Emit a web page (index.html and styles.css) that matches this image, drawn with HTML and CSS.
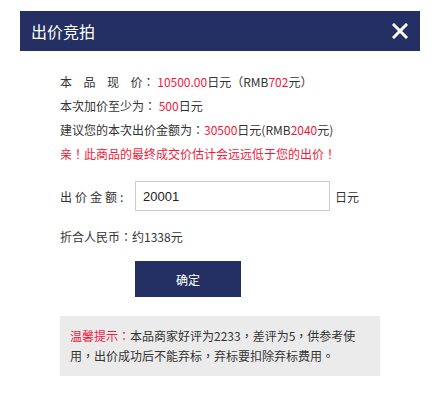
FILE: index.html
```html
<!DOCTYPE html>
<html lang="zh-TW">
<head>
  <meta charset="UTF-8" />
  <title>出价竞拍</title>
  <link rel="stylesheet" href="styles.css">
</head>
<body>

  <div class="dialog">
    <div class="dialog-head">
      <span class="dialog-title">出价竞拍</span>
      <svg class="close-btn" width="16" height="16" viewBox="0 0 16 16">
        <path d="M2 2 L14 14 M14 2 L2 14" stroke="#fff" stroke-width="3" stroke-linecap="square" />
      </svg>
    </div>

    <div class="dialog-body">
      <div class="info">
        <p><span class="spread">本品现</span>价： <span class="red">10500.00</span>日元（RMB<span class="red">702</span>元）</p>
        <p>本次加价至少为： <span class="red">500</span>日元</p>
        <p>建议您的本次出价金额为：<span class="red">30500</span>日元(RMB<span class="red">2040</span>元)</p>
        <p class="red">亲！此商品的最终成交价估计会远远低于您的出价！</p>
      </div>

      <div class="bid-row">
        <label for="price" class="bid-label">出价金额:</label>
        <input type="text" id="price" value="20001" />
        <span class="unit">日元</span>
      </div>

      <p class="rmb">折合人民币：约1338元</p>

      <div class="button-wrapper">
        <button>确定</button>
      </div>

      <p class="notice"><span class="red">温馨提示：</span>本品商家好评为2233，差评为5，供参考使用，出价成功后不能弃标，弃标要扣除弃标费用。</p>
    </div>
  </div>

</body>
</html>
```

FILE: styles.css
```css
body {
  font-family: "Noto Sans CJK TC", "Liberation Sans", sans-serif;
  font-size: 12px;
  color: #333;
  background-color: #fff;
  margin: 0;
  padding: 11px 20px;
}

p {
  margin: 0;
}

.dialog {
  width: 400px;
}

.dialog-head {
  height: 40px;
  background-color: #242f63;
  display: flex;
  align-items: center;
  justify-content: space-between;
  padding: 0 12px 0 11px;
}

.dialog-title {
  color: #fff;
  font-size: 16px;
}

.close-btn {
  display: block;
}

.dialog-body {
  padding: 19px 40px 0 40px;
}

.info p {
  line-height: 24px;
}

.spread {
  letter-spacing: 11.5px;
}

.red {
  color: #f0193c;
}

.bid-row {
  display: flex;
  align-items: center;
  margin-top: 15px;
}

.bid-label {
  width: 75px;
  letter-spacing: 3px;
  white-space: nowrap;
}

.bid-row input {
  width: 195px;
  height: 30px;
  box-sizing: border-box;
  border: 1px solid #ccc;
  padding: 0 7px;
  font-family: "Liberation Sans", "Noto Sans CJK TC", sans-serif;
  font-size: 13px;
  color: #222;
  outline: none;
}

.unit {
  margin-left: 5px;
}

.rmb {
  line-height: 24px;
  margin-top: 14px;
}

.button-wrapper {
  margin-top: 12px;
  padding-left: 75px;
}

button {
  width: 106px;
  height: 36px;
  background-color: #242f63;
  color: white;
  border: none;
  font-family: inherit;
  font-size: 12px;
  cursor: pointer;
}

.notice {
  margin-top: 19px;
  width: 320px;
  box-sizing: border-box;
  background-color: #ebebeb;
  padding: 10px 14px 10px 10px;
  line-height: 20px;
}
```
